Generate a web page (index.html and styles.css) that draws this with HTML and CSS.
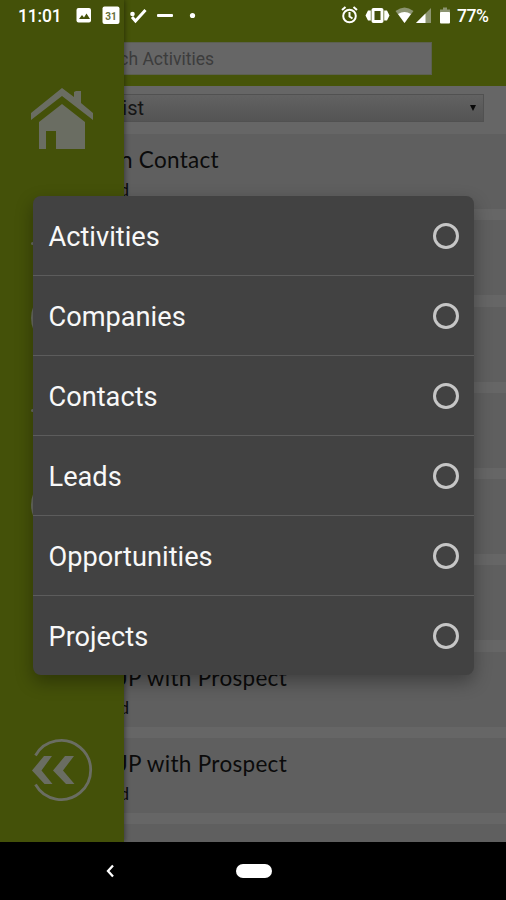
FILE: index.html
```html
<!DOCTYPE html>
<html lang="en">
<head>
<meta charset="utf-8">
<title>Activities</title>
<link rel="stylesheet" href="styles.css">
</head>
<body>
<div class="phone">
  <div class="app">
    <header class="header"><div class="search"><span class="search-text">Search Activities</span></div></header>
    <div class="filter"><div class="select"><span class="select-text">List</span><span class="arrow"></span></div></div>
    <main class="list">
      <article class="card first"><h2>n Contact</h2><p>d</p></article>
      <article class="card"></article>
      <article class="card"></article>
      <article class="card"></article>
      <article class="card"></article>
      <article class="card"></article>
      <article class="card"><h2>UP with Prospect</h2><p>d</p></article>
      <article class="card"><h2>UP with Prospect</h2><p>d</p></article>
      <article class="card last"><h2>UP with Prospect</h2></article>
    </main>
  </div>

  <nav class="drawer">
    <svg class="home" viewBox="0 0 64 64"><path d="M1 25 32 0l12 9V4l2-1h5v12l12 10v7L32 8 1 32z"/><path d="M9 34 32 16l23 18v27H26V43H16v18H9z"/></svg>
    <div class="slots"><i class="dot"></i><i class="disc"></i><i class="dot"></i><i class="disc"></i></div>
    <svg class="back" viewBox="0 0 64 64"><path class="ring" d="M5.500 17.500A29.500 29.500 0 1 1 5.500 46.500"/><path d="M14 18h8L11.500 32.500 22.500 46h-8L2 32.500z"/><path d="M35 18h9L33 32.500 44.500 46h-8.500L23 32.500z"/></svg>
  </nav>

  <div class="status">
    <span class="clock">11:01</span>
    <svg class="icons-left" viewBox="0 0 126 24">
      <rect x="1.500" y="4" width="14.500" height="14.500" rx="2"/><path class="cut" d="M4 15l3-4 2 2.500 2.500-4 3.500 5.500z"/>
      <rect x="27.500" y="2.500" width="17" height="17.500" rx="2"/><text x="36" y="15.500">31</text>
      <circle cx="57.500" cy="10" r="2.300"/><path class="tick" d="M57 13l3.500 4L70.500 6"/>
      <rect x="82" y="10" width="16" height="3" rx="1"/><circle cx="117.500" cy="11.500" r="2.600"/>
    </svg>
    <svg class="icons-right" viewBox="0 0 112 24">
      <g class="line"><circle cx="8.500" cy="12" r="6.300"/><path d="M8.500 8v4.500l3 2M1 6l3.500-3M16 6l-3.500-3"/></g>
      <rect x="30.500" y="4" width="12" height="15" rx="2"/><rect class="cut" x="33.500" y="7" width="6" height="9"/><path d="M27 6.500h2.800v10H27l-2.500-5zM46 6.500h-2.800v10H46l2.500-5z"/>
      <path class="faint" d="M54.500 7q9-7 18 0L63.500 19z"/><path d="M57 10q6.500-4 13 0L63.500 19z"/>
      <path class="faint" d="M90 4v15H75z"/><path d="M84.500 9.500V19H75z"/>
      <path class="faint" d="M102 3.500h4V5.500h3V9h-10V5.500h3z"/><rect x="99" y="8" width="10" height="11.500" rx="1"/>
    </svg>
    <span class="battery">77%</span>
  </div>

  <div class="dialog">
    <div class="option"><span>Activities</span><i class="radio"></i></div>
    <div class="option"><span>Companies</span><i class="radio"></i></div>
    <div class="option"><span>Contacts</span><i class="radio"></i></div>
    <div class="option"><span>Leads</span><i class="radio"></i></div>
    <div class="option"><span>Opportunities</span><i class="radio"></i></div>
    <div class="option"><span>Projects</span><i class="radio"></i></div>
  </div>

  <footer class="navbar">
    <svg class="nav-back" viewBox="0 0 10 14"><path d="M8 1.500 3 7l5 5.500"/></svg>
    <i class="pill"></i>
  </footer>
</div>
</body>
</html>
```

FILE: styles.css
```css
* { box-sizing: border-box; }
body { margin: 0; background: #000; font-family: Roboto, sans-serif; }
.phone { position: relative; width: 506px; height: 900px; overflow: hidden; display: flex; flex-direction: column; }
.app { height: 842px; overflow: hidden; background: #666; }
.header { height: 86px; padding-top: 42px; background: #465409; }
.search { width: 432px; height: 33px; display: flex; align-items: center; background: #666; border: 1px solid #5c6050; }
.search-text { width: 213px; text-align: right; font-size: 17.500px; color: #3c3c3c; white-space: nowrap; }
.filter { height: 48px; padding-top: 8px; }
.select { width: 484px; height: 28px; display: flex; align-items: center; justify-content: space-between; padding-right: 7px; background: linear-gradient(#626262, #545454); border: 1px solid #515151; }
.select-text { width: 143px; text-align: right; font-size: 20px; color: #151515; }
.arrow { border: 3.500px solid transparent; border-top: 6px solid #080808; border-bottom: 0; }
.list { display: flex; flex-direction: column; gap: 11.300px; }
.card { flex: none; height: 75px; padding-top: 12px; background: #5f5f5f; }
.card h2, .card p { margin: 0; text-align: right; font-family: Lato, sans-serif; font-weight: 400; color: #0b0b0b; white-space: nowrap; }
.card h2 { width: 287px; height: 27px; line-height: 27px; font-size: 22.500px; letter-spacing: .3px; }
.card p { width: 129px; padding-top: 5px; line-height: 24px; font-size: 17px; }
.first h2 { width: 219px; }
.last { padding-top: 14px; }

.drawer { position: absolute; left: 0; top: 0; width: 124px; height: 842px; padding: 88px 0 0 30px; background: #445109; box-shadow: 1px 0 5px #0006; fill: #6a6d62; }
.home, .back { display: block; width: 64px; height: 64px; }
.ring { fill: none; stroke: #6a6d62; stroke-width: 2.800; }
.slots { height: 586px; padding: 90px 0 0 1px; display: flex; flex-direction: column; }
.dot { width: 3px; height: 3px; border-radius: 50%; background: #6a6d62; }
.disc { width: 60px; height: 60px; margin: 43px 0 61px; border-radius: 50%; background: #6a6d62; }
.disc:last-child { margin: 63px 0 0; }

.status { position: absolute; left: 0; top: 0; width: 506px; height: 32px; display: flex; align-items: center; padding-left: 18px; color: #fff; fill: #fff; font-size: 17.500px; font-weight: 500; }
.clock { width: 57px; letter-spacing: -.2px; }
.icons-left { width: 126px; height: 24px; }
.icons-right { width: 112px; height: 24px; margin-left: 140px; }
.battery { margin-left: 4px; letter-spacing: -.4px; }
.cut { fill: #445109; }
.faint { fill: #8c9471; }
.tick { fill: none; stroke: #fff; stroke-width: 3; }
.line { fill: none; stroke: #fff; stroke-width: 2; }
.icons-left text { font: 700 10px Roboto, sans-serif; fill: #66703a; text-anchor: middle; }

.dialog { position: absolute; left: 33px; top: 196px; width: 441px; height: 479px; display: flex; flex-direction: column; border-radius: 8px; overflow: hidden; background: #424242; box-shadow: 0 7px 18px #0005; }
.option { flex: 1; display: flex; align-items: center; justify-content: space-between; padding: 3px 15px 0 15.500px; border-bottom: 1px solid #5c5c5c; color: #f8f8f8; font-size: 27.200px; }
.option:last-child { border-bottom: 0; }
.radio { width: 26px; height: 26px; margin-top: -3px; border: 3px solid #c6c6c6; border-radius: 50%; }

.navbar { height: 58px; display: flex; align-items: center; background: #000; padding-left: 105px; }
.nav-back { width: 10px; height: 14px; fill: none; stroke: #fff; stroke-width: 2.300; }
.pill { width: 36px; height: 14px; margin-left: 121px; border-radius: 7px; background: #fff; }
```
